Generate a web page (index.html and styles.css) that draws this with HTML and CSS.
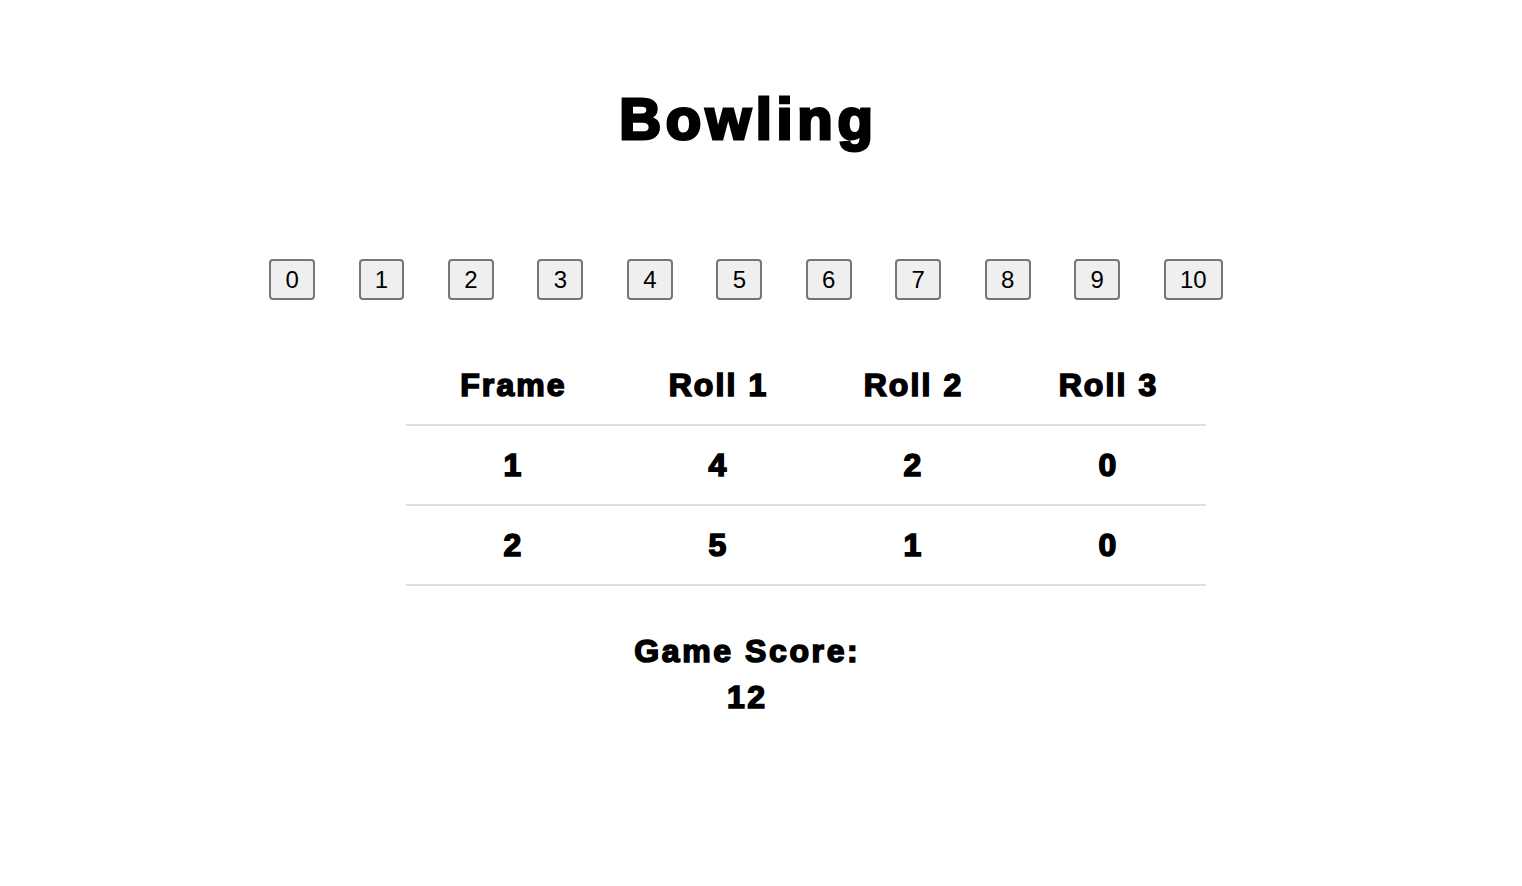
FILE: index.html
```html
<!DOCTYPE html>
<html lang="en">
<head>
<meta charset="utf-8">
<title>Bowling</title>
<link rel="stylesheet" href="styles.css">
</head>
<body>
<div class="page">
  <h1 class="title">Bowling</h1>
  <div class="pins">
    <button class="pin">0</button>
    <button class="pin">1</button>
    <button class="pin">2</button>
    <button class="pin">3</button>
    <button class="pin">4</button>
    <button class="pin">5</button>
    <button class="pin">6</button>
    <button class="pin">7</button>
    <button class="pin">8</button>
    <button class="pin">9</button>
    <button class="pin">10</button>
  </div>
  <table class="score-table">
    <colgroup>
      <col class="col-wide">
      <col class="col">
      <col class="col">
      <col class="col">
    </colgroup>
    <thead>
      <tr><th>Frame</th><th>Roll 1</th><th>Roll 2</th><th>Roll 3</th></tr>
    </thead>
    <tbody>
      <tr><td>1</td><td>4</td><td>2</td><td>0</td></tr>
      <tr><td>2</td><td>5</td><td>1</td><td>0</td></tr>
    </tbody>
  </table>
  <div class="game-score">
    <div>Game Score:</div>
    <div>12</div>
  </div>
</div>
</body>
</html>
```
FILE: styles.css
```css
html, body {
  margin: 0;
  padding: 0;
  background: #ffffff;
  color: #000000;
}

body {
  font-family: "Liberation Sans", Arial, sans-serif;
}

.page {
  width: 1492px;
  text-align: center;
}

.title {
  margin: 84px 0 0 0;
  font-size: 58px;
  line-height: 70px;
  font-weight: 700;
  letter-spacing: 4.7px;
  padding-left: 4.7px;
  -webkit-text-stroke: 3px #000;
}

.pins {
  margin-top: 105px;
  display: flex;
  justify-content: center;
  gap: 43.5px;
}

.pin {
  height: 41px;
  padding: 0 14.3px;
  font-family: "Liberation Sans", Arial, sans-serif;
  font-size: 24px;
  color: #000;
  background: #efefef;
  border: 2px solid #767676;
  border-radius: 4px;
}

.score-table {
  margin: 46px 0 0 406px;
  width: 800px;
  border-collapse: collapse;
  table-layout: fixed;
}

.col-wide { width: 215px; }
.col { width: 195px; }

.score-table th,
.score-table td {
  height: 78px;
  padding: 0;
  text-align: center;
  vertical-align: middle;
  font-size: 32px;
  font-weight: 700;
  letter-spacing: 2.1px;
  -webkit-text-stroke: 1.6px #000;
  border-bottom: 2px solid #dddddd;
}

.game-score {
  margin-top: 42px;
  font-size: 32px;
  line-height: 46px;
  font-weight: 700;
  letter-spacing: 2.6px;
  padding-left: 2.6px;
  -webkit-text-stroke: 1.6px #000;
}
```
